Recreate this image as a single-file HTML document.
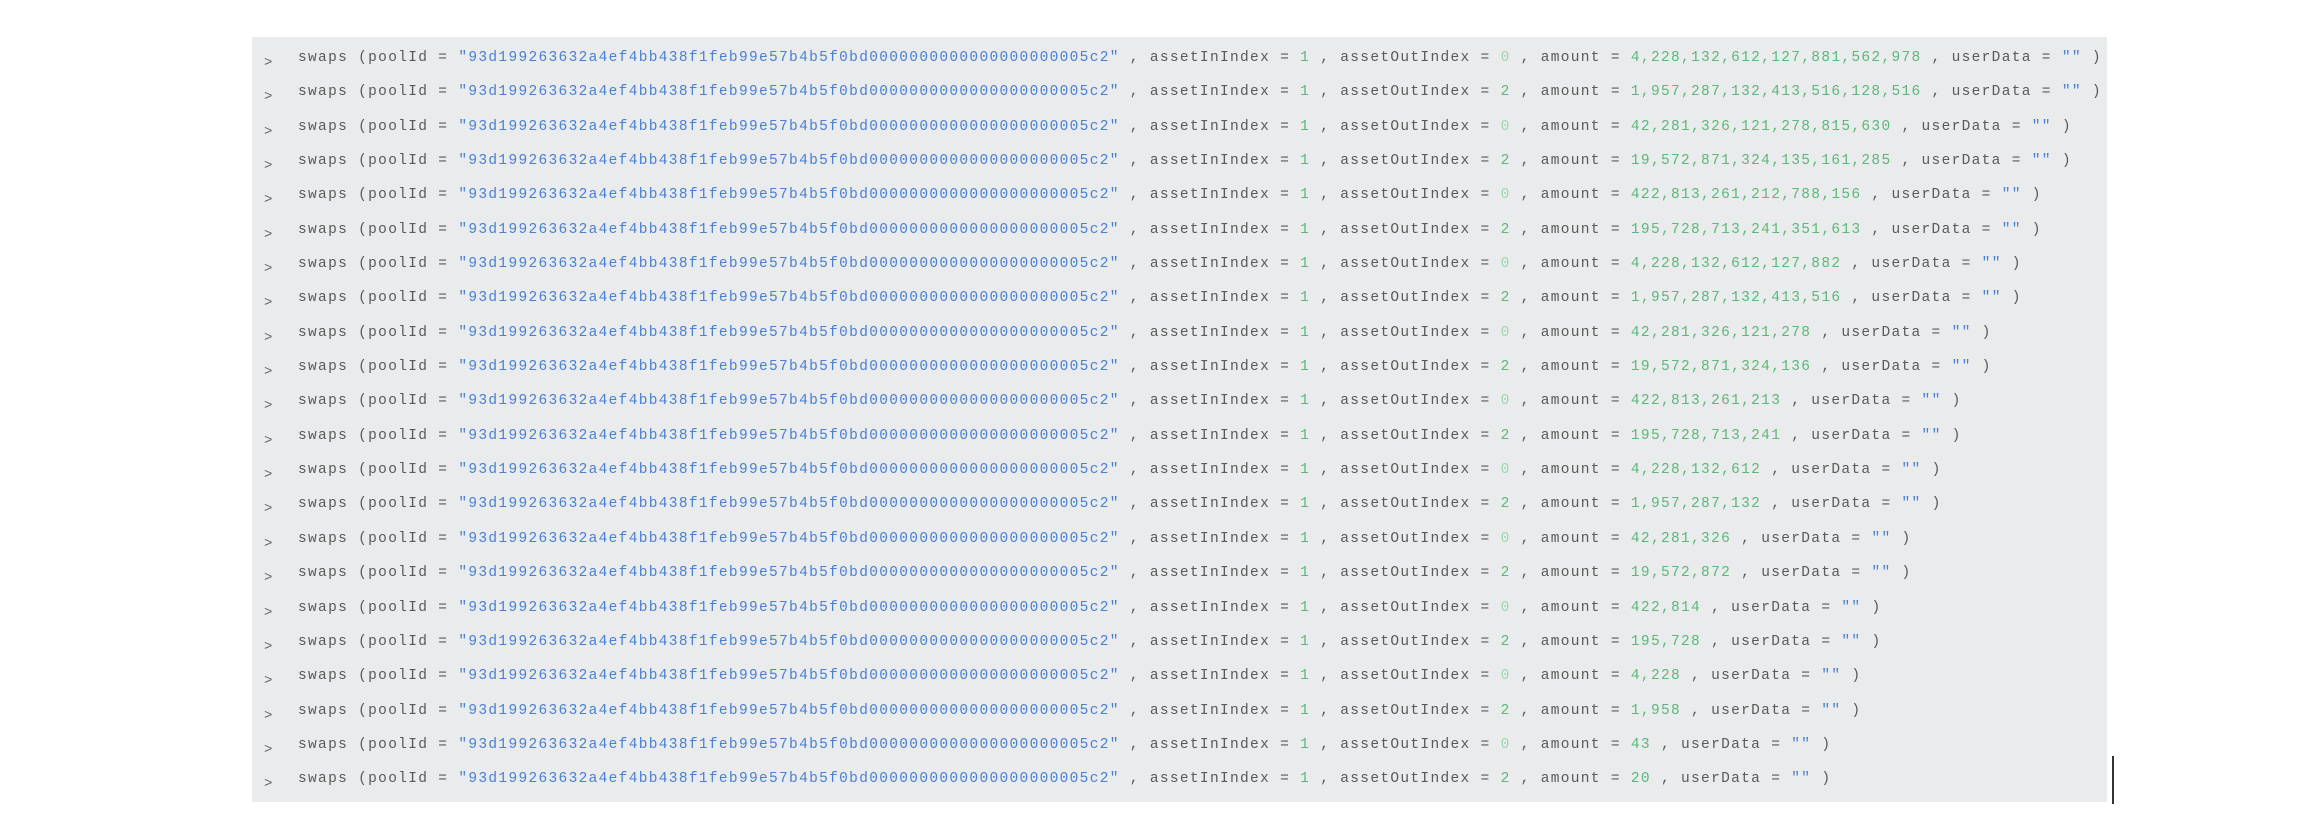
<!DOCTYPE html>
<html><head><meta charset="utf-8"><style>
html,body{margin:0;padding:0;background:#fff;width:2320px;height:828px;overflow:hidden}
.panel{position:absolute;left:252px;top:37px;width:1855px;height:765px;background:#e9ebec}
.rows{position:absolute;left:298px;top:46px;font-family:"Liberation Mono",monospace;font-size:14.5px;letter-spacing:1.32px;color:#5a5a5a}
.r{height:34.35px;line-height:24px;position:relative;white-space:pre}
.r:before{content:">";position:absolute;left:-34px;top:5px;color:#666;font-size:14px;letter-spacing:0}
.h{color:#4a80d2}.n{color:#5cb87a}.z{color:#9fd6b0}
.cur{position:absolute;left:2112px;top:756px;width:2px;height:48px;background:#333}
</style></head><body>
<div class="panel"></div>
<div class="rows">
<div class="r">swaps (poolId = <span class="h">"93d199263632a4ef4bb438f1feb99e57b4b5f0bd0000000000000000000005c2"</span> , assetInIndex = <span class="n">1</span> , assetOutIndex = <span class="z">0</span> , amount = <span class="n">4,228,132,612,127,881,562,978</span> , userData = <span class="h">""</span> )</div>
<div class="r">swaps (poolId = <span class="h">"93d199263632a4ef4bb438f1feb99e57b4b5f0bd0000000000000000000005c2"</span> , assetInIndex = <span class="n">1</span> , assetOutIndex = <span class="n">2</span> , amount = <span class="n">1,957,287,132,413,516,128,516</span> , userData = <span class="h">""</span> )</div>
<div class="r">swaps (poolId = <span class="h">"93d199263632a4ef4bb438f1feb99e57b4b5f0bd0000000000000000000005c2"</span> , assetInIndex = <span class="n">1</span> , assetOutIndex = <span class="z">0</span> , amount = <span class="n">42,281,326,121,278,815,630</span> , userData = <span class="h">""</span> )</div>
<div class="r">swaps (poolId = <span class="h">"93d199263632a4ef4bb438f1feb99e57b4b5f0bd0000000000000000000005c2"</span> , assetInIndex = <span class="n">1</span> , assetOutIndex = <span class="n">2</span> , amount = <span class="n">19,572,871,324,135,161,285</span> , userData = <span class="h">""</span> )</div>
<div class="r">swaps (poolId = <span class="h">"93d199263632a4ef4bb438f1feb99e57b4b5f0bd0000000000000000000005c2"</span> , assetInIndex = <span class="n">1</span> , assetOutIndex = <span class="z">0</span> , amount = <span class="n">422,813,261,212,788,156</span> , userData = <span class="h">""</span> )</div>
<div class="r">swaps (poolId = <span class="h">"93d199263632a4ef4bb438f1feb99e57b4b5f0bd0000000000000000000005c2"</span> , assetInIndex = <span class="n">1</span> , assetOutIndex = <span class="n">2</span> , amount = <span class="n">195,728,713,241,351,613</span> , userData = <span class="h">""</span> )</div>
<div class="r">swaps (poolId = <span class="h">"93d199263632a4ef4bb438f1feb99e57b4b5f0bd0000000000000000000005c2"</span> , assetInIndex = <span class="n">1</span> , assetOutIndex = <span class="z">0</span> , amount = <span class="n">4,228,132,612,127,882</span> , userData = <span class="h">""</span> )</div>
<div class="r">swaps (poolId = <span class="h">"93d199263632a4ef4bb438f1feb99e57b4b5f0bd0000000000000000000005c2"</span> , assetInIndex = <span class="n">1</span> , assetOutIndex = <span class="n">2</span> , amount = <span class="n">1,957,287,132,413,516</span> , userData = <span class="h">""</span> )</div>
<div class="r">swaps (poolId = <span class="h">"93d199263632a4ef4bb438f1feb99e57b4b5f0bd0000000000000000000005c2"</span> , assetInIndex = <span class="n">1</span> , assetOutIndex = <span class="z">0</span> , amount = <span class="n">42,281,326,121,278</span> , userData = <span class="h">""</span> )</div>
<div class="r">swaps (poolId = <span class="h">"93d199263632a4ef4bb438f1feb99e57b4b5f0bd0000000000000000000005c2"</span> , assetInIndex = <span class="n">1</span> , assetOutIndex = <span class="n">2</span> , amount = <span class="n">19,572,871,324,136</span> , userData = <span class="h">""</span> )</div>
<div class="r">swaps (poolId = <span class="h">"93d199263632a4ef4bb438f1feb99e57b4b5f0bd0000000000000000000005c2"</span> , assetInIndex = <span class="n">1</span> , assetOutIndex = <span class="z">0</span> , amount = <span class="n">422,813,261,213</span> , userData = <span class="h">""</span> )</div>
<div class="r">swaps (poolId = <span class="h">"93d199263632a4ef4bb438f1feb99e57b4b5f0bd0000000000000000000005c2"</span> , assetInIndex = <span class="n">1</span> , assetOutIndex = <span class="n">2</span> , amount = <span class="n">195,728,713,241</span> , userData = <span class="h">""</span> )</div>
<div class="r">swaps (poolId = <span class="h">"93d199263632a4ef4bb438f1feb99e57b4b5f0bd0000000000000000000005c2"</span> , assetInIndex = <span class="n">1</span> , assetOutIndex = <span class="z">0</span> , amount = <span class="n">4,228,132,612</span> , userData = <span class="h">""</span> )</div>
<div class="r">swaps (poolId = <span class="h">"93d199263632a4ef4bb438f1feb99e57b4b5f0bd0000000000000000000005c2"</span> , assetInIndex = <span class="n">1</span> , assetOutIndex = <span class="n">2</span> , amount = <span class="n">1,957,287,132</span> , userData = <span class="h">""</span> )</div>
<div class="r">swaps (poolId = <span class="h">"93d199263632a4ef4bb438f1feb99e57b4b5f0bd0000000000000000000005c2"</span> , assetInIndex = <span class="n">1</span> , assetOutIndex = <span class="z">0</span> , amount = <span class="n">42,281,326</span> , userData = <span class="h">""</span> )</div>
<div class="r">swaps (poolId = <span class="h">"93d199263632a4ef4bb438f1feb99e57b4b5f0bd0000000000000000000005c2"</span> , assetInIndex = <span class="n">1</span> , assetOutIndex = <span class="n">2</span> , amount = <span class="n">19,572,872</span> , userData = <span class="h">""</span> )</div>
<div class="r">swaps (poolId = <span class="h">"93d199263632a4ef4bb438f1feb99e57b4b5f0bd0000000000000000000005c2"</span> , assetInIndex = <span class="n">1</span> , assetOutIndex = <span class="z">0</span> , amount = <span class="n">422,814</span> , userData = <span class="h">""</span> )</div>
<div class="r">swaps (poolId = <span class="h">"93d199263632a4ef4bb438f1feb99e57b4b5f0bd0000000000000000000005c2"</span> , assetInIndex = <span class="n">1</span> , assetOutIndex = <span class="n">2</span> , amount = <span class="n">195,728</span> , userData = <span class="h">""</span> )</div>
<div class="r">swaps (poolId = <span class="h">"93d199263632a4ef4bb438f1feb99e57b4b5f0bd0000000000000000000005c2"</span> , assetInIndex = <span class="n">1</span> , assetOutIndex = <span class="z">0</span> , amount = <span class="n">4,228</span> , userData = <span class="h">""</span> )</div>
<div class="r">swaps (poolId = <span class="h">"93d199263632a4ef4bb438f1feb99e57b4b5f0bd0000000000000000000005c2"</span> , assetInIndex = <span class="n">1</span> , assetOutIndex = <span class="n">2</span> , amount = <span class="n">1,958</span> , userData = <span class="h">""</span> )</div>
<div class="r">swaps (poolId = <span class="h">"93d199263632a4ef4bb438f1feb99e57b4b5f0bd0000000000000000000005c2"</span> , assetInIndex = <span class="n">1</span> , assetOutIndex = <span class="z">0</span> , amount = <span class="n">43</span> , userData = <span class="h">""</span> )</div>
<div class="r">swaps (poolId = <span class="h">"93d199263632a4ef4bb438f1feb99e57b4b5f0bd0000000000000000000005c2"</span> , assetInIndex = <span class="n">1</span> , assetOutIndex = <span class="n">2</span> , amount = <span class="n">20</span> , userData = <span class="h">""</span> )</div>
</div>
<div class="cur"></div>
</body></html>
